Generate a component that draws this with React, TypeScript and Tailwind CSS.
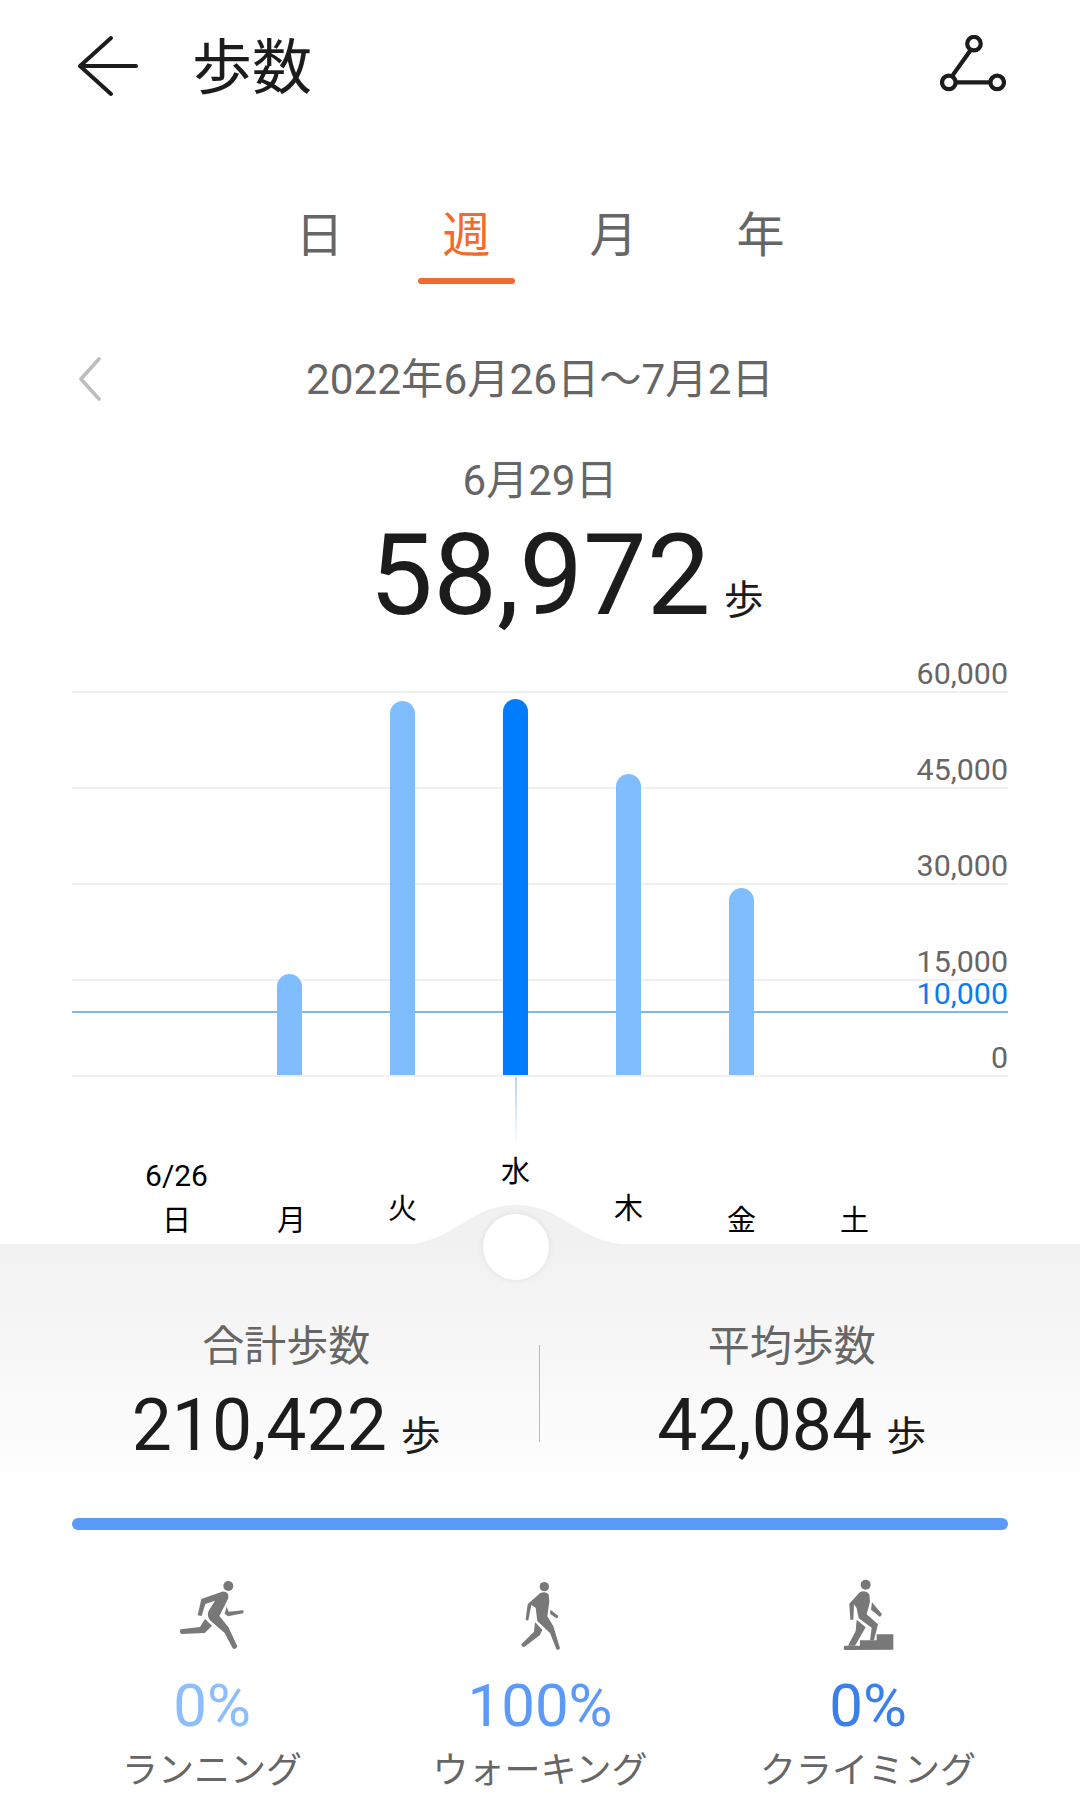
import React from 'react';

const days = [
  { label: '日', top: 'pt-[124px]', note: '6/26' },
  { label: '月', top: 'pt-[124px] translate-x-[2px]' },
  { label: '火', top: 'pt-[112px]' },
  { label: '水', top: 'pt-[75px]' },
  { label: '木', top: 'pt-[112px]' },
  { label: '金', top: 'pt-[124px]' },
  { label: '土', top: 'pt-[124px]' },
];

const bars = [0, 101, 374, 376, 301, 187, 0];

const axis = ['60,000', '45,000', '30,000', '15,000'];

const RunIcon = () => (
  <svg width="120" height="100" viewBox="-24 0 360 300" fill="#787878">
    <circle cx="205" cy="75" r="15" />
    <path d="M124 114 L186 92 Q208 90 205 112 L178 165 L205 198 L232 256 Q228 268 218 262 L194 216 L150 178 Q138 160 148 146 L165 119 L136 129 L125 165 L113 163 Z" />
    <path d="M135 174 L156 194 L134 216 L64 219 Q56 212 62 205 L120 198 Z" />
    <path d="M200 137 L206 152 L249 148 Q254 153 249 157 L204 166 L194 158 Z" />
  </svg>
);

const WalkIcon = () => (
  <svg width="120" height="100" viewBox="-30 0 360 300" fill="#787878">
    <circle cx="163" cy="77" r="14" />
    <path d="M150 97 Q165 90 176 100 L178 122 L172 166 L190 196 L210 262 Q205 270 199 264 L180 216 L142 180 L137 140 L124 132 L115 178 Q109 180 107 175 L113 130 Z" />
    <path d="M135 183 L157 206 L150 222 L103 258 Q95 258 94 250 L132 212 Z" />
    <path d="M181 146 L205 165 Q204 172 199 172 L180 158 Z" />
  </svg>
);

const ClimbIcon = () => (
  <svg width="120" height="100" viewBox="-6 0 360 300" fill="#787878">
    <circle cx="167" cy="71" r="15" />
    <path d="M150 93 Q168 86 178 100 L180 122 L170 160 L204 190 L192 238 L180 238 L185 200 L146 172 L140 142 L132 130 L130 176 L121 176 L118 128 Z" />
    <path d="M140 176 L167 199 L135 254 L114 254 L137 210 Z" />
    <path d="M186 124 L216 160 L210 168 L183 146 Z" />
    <path d="M104 254 L150 254 L150 238 L200 238 L200 220 L250 220 L250 266 L104 267 Q98 262 104 254 Z" />
  </svg>
);

const activities = [
  { icon: <RunIcon />, pct: '0%', color: 'text-[#8dbdfb]', label: 'ランニング' },
  { icon: <WalkIcon />, pct: '100%', color: 'text-[#5b9af8]', label: 'ウォーキング' },
  { icon: <ClimbIcon />, pct: '0%', color: 'text-[#3b80ea]', label: 'クライミング' },
];

function Chart() {
  return (
    <div className="ml-[72px] mt-[55px] w-[936px]">
      <div className="relative flex flex-col border-b-2 border-[#f0f0f0]">
        {axis.map((a) => (
          <div key={a} className="relative h-[96px] border-t-2 border-[#f0f0f0]">
            <span className="absolute right-0 -top-[33px] text-[30.4px] leading-[28px]">{a}</span>
          </div>
        ))}
        {/* 10,000 target */}
        <div className="absolute left-0 right-0 top-[320px] h-[2px] bg-[#7fb8e6]" />
        <span className="absolute right-0 top-[289px] text-[30.4px] leading-[28px] text-[#0a7cf0]">10,000</span>
        <span className="absolute right-0 top-[353px] text-[30.4px] leading-[28px]">0</span>
        {/* bars */}
        <div className="absolute left-[48px] bottom-0 flex items-end">
          {bars.map((h, i) => (
            <div key={i} className="w-[113px] flex justify-center">
              {h > 0 && (
                <div
                  className={`w-[25px] rounded-t-full ${i === 3 ? 'bg-[#007dff]' : 'bg-[#80bdff]'}`}
                  style={{ height: h }}
                />
              )}
            </div>
          ))}
        </div>
      </div>
    </div>
  );
}

function DayLabels() {
  return (
    <div className="relative h-[167px] pl-[120px] flex text-black">
      <div className="absolute left-[515px] top-0 w-[2px] h-[72px] bg-[linear-gradient(#b5d6f5,#ffffff)]" />
      {days.map((d) => (
        <div key={d.label} className={`relative w-[113px] flex flex-col items-center text-[29px] leading-[40px] ${d.top}`}>
          {d.note && <span className="absolute top-[79px] text-[30px]">{d.note}</span>}
          <span>{d.label}</span>
        </div>
      ))}
    </div>
  );
}

function Stat({ title, value, className }: { title: string; value: string; className: string }) {
  return (
    <div className={`flex-1 flex flex-col items-center ${className}`}>
      <span className="text-[42px] leading-[60px]">{title}</span>
      <div className="mt-[4px] h-[90px] flex items-baseline text-[#1c1c1c]">
        <span className="text-[71.5px] leading-[90px]">{value}</span>
        <span className="ml-[14px] text-[40px]">歩</span>
      </div>
    </div>
  );
}

export default function App() {
  return (
    <div className="w-[1080px] h-[1809px] overflow-hidden bg-white font-['Roboto','Noto_Sans_CJK_JP',sans-serif] text-[#666666]">
      {/* header */}
      <div className="h-[132px] flex items-start justify-between pl-[77px] pr-[74px]">
        <div className="flex items-center h-[132px]">
          <svg width="62" height="62" viewBox="0 0 62 62" fill="none" stroke="#1c1c1c" strokeWidth="4" strokeLinecap="round" strokeLinejoin="round">
            <path d="M34 3 L3 31 L34 59 M3 31 H59" />
          </svg>
          <span className="ml-[53px] mt-[6px] text-[60px] leading-[126px] text-[#1c1c1c]">歩数</span>
        </div>
        <svg width="66" height="60" viewBox="0 0 68 62" fill="none" stroke="#1c1c1c" strokeWidth="4.4" className="mt-[35px]">
          <circle cx="35" cy="9" r="7" />
          <circle cx="9" cy="49" r="7" />
          <circle cx="59" cy="49" r="7" />
          <path d="M32 15 L12 43 M16 49 H52" />
        </svg>
      </div>

      {/* tabs */}
      <div className="h-[152px] flex justify-center pt-[72px]">
        <div className="flex">
          {['日', '週', '月', '年'].map((t) => (
            <div key={t} className="w-[147px] flex flex-col items-center">
              <span className={`text-[48px] leading-[64px] ${t === '週' ? 'text-[#f26a2e]' : 'text-[#666666]'}`}>{t}</span>
              {t === '週' && <div className="mt-[10px] w-[97px] h-[7px] rounded-full bg-[#f26a2e]" />}
            </div>
          ))}
        </div>
      </div>

      {/* date range */}
      <div className="h-[60px] mt-[66px] flex items-center pl-[78px]">
        <svg width="24" height="44" viewBox="0 0 24 44" fill="none" stroke="#bdbdbd" strokeWidth="3.6" strokeLinecap="round" strokeLinejoin="round" className="mb-[3px]">
          <path d="M21 2 L3 22 L21 42" />
        </svg>
        <span className="ml-[204px] text-[42.3px] leading-[60px] whitespace-nowrap">2022年6月26日～7月2日</span>
      </div>

      {/* selected day */}
      <div className="text-center text-[42px] leading-[54px] mt-[44px]">6月29日</div>
      <div className="flex justify-center items-baseline pl-[53px] h-[120px] mt-[8px] text-[#1c1c1c]">
        <span className="text-[113.5px] leading-[120px]">58,972</span>
        <span className="ml-[13px] text-[40px]">歩</span>
      </div>

      <Chart />
      <DayLabels />

      {/* summary panel */}
      <div className="relative h-[566px] bg-[linear-gradient(#f1f1f1,#ffffff_45%)]">
        <svg width="240" height="41" viewBox="0 0 240 41" className="absolute left-[396px] -top-[40px]" fill="#f1f1f1">
          <path d="M0 41 C60 41 70 1 120 1 C170 1 180 41 240 41 Z" />
        </svg>
        <div className="absolute left-[483px] -top-[30px] w-[66px] h-[66px] rounded-full bg-white shadow-[0_0_6px_rgba(0,0,0,0.08)]" />

        <div className="flex pt-[73px]">
          <Stat title="合計歩数" value="210,422" className="pl-[34px]" />
          <div className="w-[1px] h-[97px] mt-[28px] bg-[#bbbbbb]" />
          <Stat title="平均歩数" value="42,084" className="pr-[36px]" />
        </div>

        <div className="mx-[72px] mt-[47px] h-[12px] rounded-full bg-[#5b9af8]" />

        <div className="ml-[48px] flex">
          {activities.map((a) => (
            <div key={a.label} className="w-[328px] flex flex-col items-center">
              <div className="mt-[31px]">{a.icon}</div>
              <span className={`mt-[10px] text-[60px] leading-[70px] ${a.color}`}>{a.pct}</span>
              <span className="mt-[5px] text-[36px] leading-[50px] whitespace-nowrap">{a.label}</span>
            </div>
          ))}
        </div>
      </div>
    </div>
  );
}
